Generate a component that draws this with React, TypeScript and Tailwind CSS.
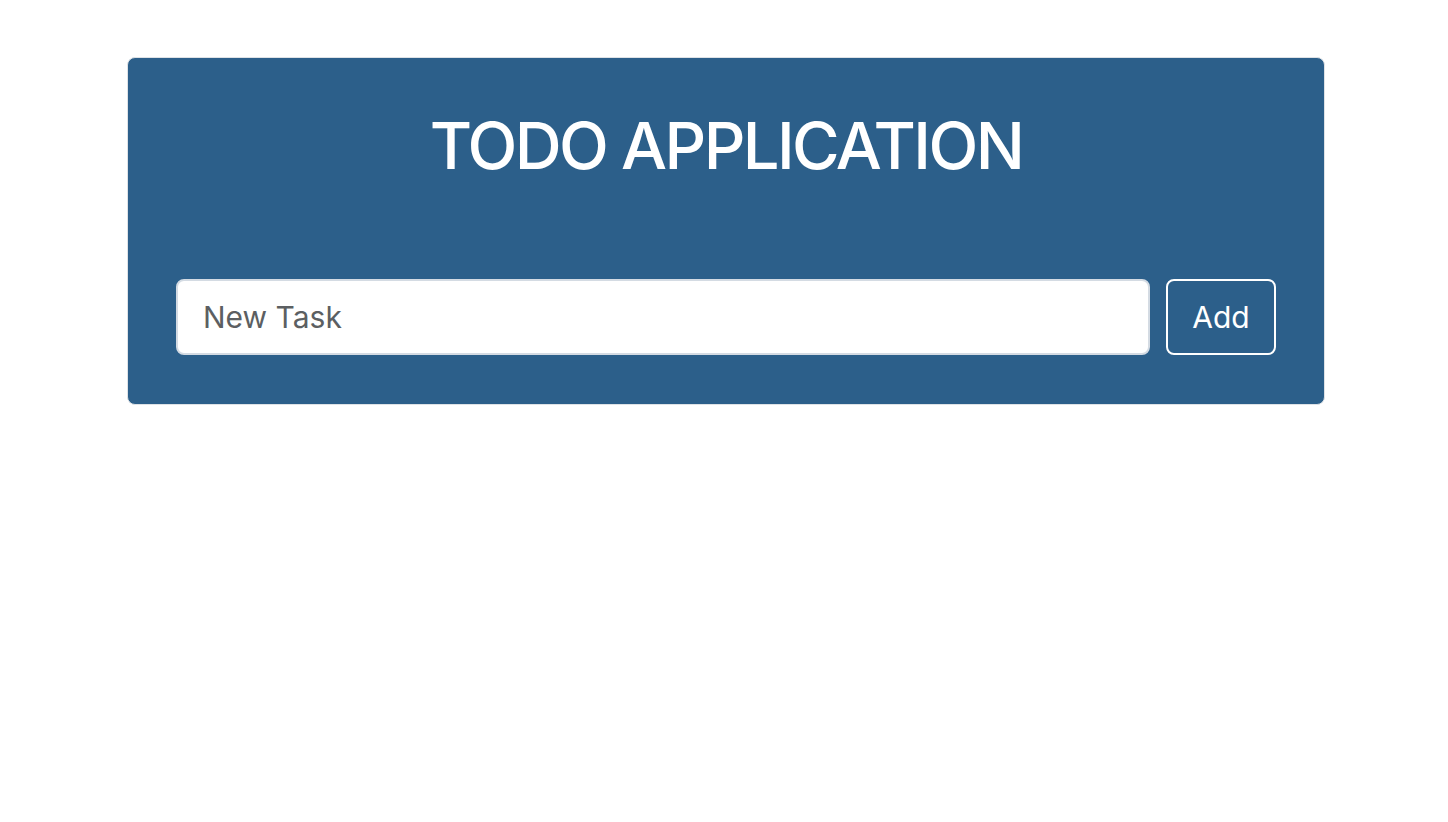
import React from "react";

const App = () => {
  return (
    <div className="min-h-screen bg-white pt-[57px] pl-[127px] pr-[123px]" style={{ fontFamily: "Inter, 'Noto Sans', sans-serif" }}>
      <div className="bg-[#2c5f8a] border border-[#dee2e6] rounded-lg px-12 pb-[49px] pt-[49px]">
        <h1 className="text-white text-center text-[65px] leading-[1.2] font-medium tracking-[-0.04em] mb-[94px]">TODO APPLICATION</h1>
        <div className="flex gap-4">
          <input
            type="text"
            placeholder="New Task"
            className="flex-1 h-[76px] bg-white rounded-lg border-2 border-[#d4dbe3] px-[25px] text-[30px] text-[#212529] placeholder:text-[#5c5f62] outline-none"
          />
          <button className="w-[110px] h-[76px] border-2 border-white rounded-lg text-white text-[30px]">Add</button>
        </div>
      </div>
    </div>
  );
};

export default App;
